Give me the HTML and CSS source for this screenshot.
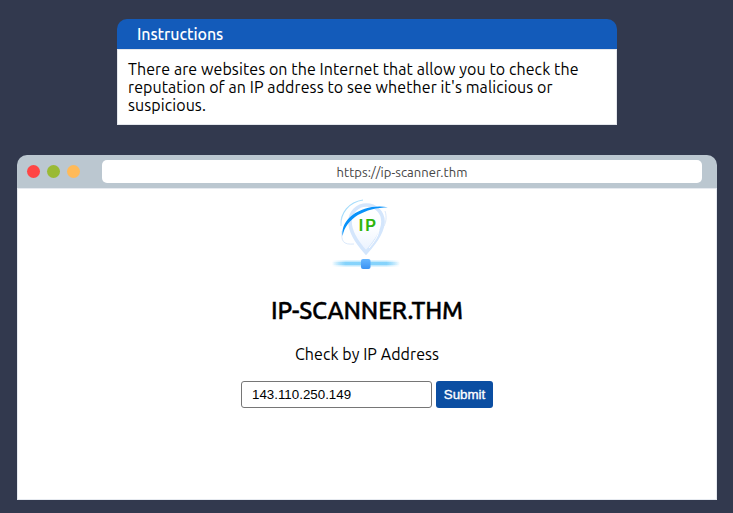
FILE: index.html
```html
<!DOCTYPE html>
<html lang="en">
<head>
<meta charset="utf-8">
<title>IP-SCANNER.THM</title>
<link rel="stylesheet" href="styles.css">
</head>
<body>
<section class="instructions">
  <h2 class="instructions-title">Instructions</h2>
  <p class="instructions-text">There are websites on the Internet that allow you to check the<br>reputation of an IP address to see whether it's malicious or<br>suspicious.</p>
</section>
<main class="browser">
  <header class="toolbar">
    <i class="dot red"></i><i class="dot green"></i><i class="dot amber"></i>
    <div class="address">https://ip-scanner.thm</div>
  </header>
  <div class="page">
    <svg class="logo" width="85" height="85" viewBox="0 0 85 85">
      <defs>
        <linearGradient id="bar" x1="0" x2="1"><stop offset="0" stop-color="#72ccfb" stop-opacity="0"/><stop offset=".2" stop-color="#72ccfb"/><stop offset=".8" stop-color="#72ccfb"/><stop offset="1" stop-color="#72ccfb" stop-opacity="0"/></linearGradient>
        <linearGradient id="pin" x1="0" y1="0" x2="0" y2="1"><stop offset="0" stop-color="#fff"/><stop offset=".5" stop-color="#fcfdff"/><stop offset="1" stop-color="#e9f2fe"/></linearGradient>
        <linearGradient id="node" x1="0" y1="0" x2="0" y2="1"><stop offset="0" stop-color="#66b6ff"/><stop offset="1" stop-color="#3b93f3"/></linearGradient>
        <linearGradient id="fade" x1="0" y1="0" x2="0" y2="1"><stop offset="0" stop-color="#a4dcfb"/><stop offset=".6" stop-color="#a4dcfb"/><stop offset="1" stop-color="#d5e6fb"/></linearGradient>
      </defs>
      <path d="M41 62.500C36 57 25 44 25 31.500a16.500 16.500 0 0 1 33 0C58 44 46 57 41 62.500Z" fill="url(#pin)" stroke="#d4e6fc" stroke-width="3.600"/>
      <path d="M44 58C49 52 53 47 54 40" fill="none" stroke="#fff" stroke-width="1"/>
      <path d="M38 10C24 12 15 23 16 36" fill="none" stroke="url(#fade)" stroke-width="1.200"/>
      <path d="M17 41C16 51 18 55 29 54" fill="none" stroke="#dbe9fb" stroke-width="1"/>
      <path d="M60 21C62 27 61 32 59 36" fill="none" stroke="#dbe9fb" stroke-width="1"/>
      <path d="M17.600 46C15 27 40 13 63 17.300C40 18 21 28 17.600 46Z" fill="#0892fa"/>
      <rect x="7" y="70.500" width="68" height="6" fill="url(#bar)" opacity=".45"/>
      <rect x="7" y="72" width="68" height="3" fill="url(#bar)" opacity=".75"/>
      <rect x="36" y="69" width="9.500" height="10" rx="2" fill="url(#node)"/>
      <text class="logo-text" x="33.700" y="40.500" textLength="17.300" lengthAdjust="spacing">IP</text>
    </svg>
    <h1>IP-SCANNER.THM</h1>
    <p class="prompt">Check by IP Address</p>
    <form class="lookup"><input type="text" value="143.110.250.149" aria-label="IP address"><button type="button">Submit</button></form>
  </div>
</main>
</body>
</html>
```
FILE: styles.css
```css
* { box-sizing: border-box; }
body {
  margin: 0;
  height: 513px;
  padding: 19px 16px 0 17px;
  overflow: hidden;
  background: #32394e;
  color: #000;
  font: 16px/18px Ubuntu, "Noto Sans", sans-serif;
}
h1, h2, p { margin: 0; font-weight: 400; }
.instructions {
  width: 500px;
  height: 106px;
  margin: 0 auto 30px;
  overflow: hidden;
  border-radius: 10px 10px 0 0;
  background: linear-gradient(#135bba 30px, #fff 30px);
}
.instructions-title {
  height: 30px;
  padding-left: 20px;
  color: #fff;
  font-size: 16px;
  line-height: 30px;
  font-weight: 500;
  letter-spacing: -0.08px;
}
.instructions-text {
  height: 76px;
  padding: 10px 10px 0;
  border: 1px solid #e4e7ec;
  white-space: nowrap;
  letter-spacing: 0.085px;
}
.browser {
  width: 700px;
  height: 345px;
  overflow: hidden;
  border-radius: 10px 10px 0 0;
  background: linear-gradient(#bbc7d0 33px, #fff 33px);
}
.toolbar {
  display: flex;
  align-items: center;
  gap: 7px;
  height: 33px;
  padding-left: 10px;
}
.dot { width: 13px; height: 13px; border-radius: 50%; }
.red { background: #ff4545; }
.green { background: #9aba34; }
.amber { background: #ffba59; }
.address {
  width: 600px;
  height: 23px;
  margin-left: 15px;
  border-radius: 5px;
  background: #fff;
  color: #444;
  font-size: 13px;
  line-height: 24px;
  letter-spacing: 0.05px;
  text-align: center;
}
.page {
  display: flex;
  flex-direction: column;
  align-items: center;
  height: 312px;
  padding-top: 1px;
  border: 1px solid #e6eaf0;
}
.logo { display: block; margin-bottom: 20px; }
.logo-text { fill: #2db50c; font: 700 16px "Liberation Sans", sans-serif; }
h1 {
  height: 32px;
  font-size: 24px;
  line-height: 32px;
  font-weight: 500;
  letter-spacing: -0.15px;
  -webkit-text-stroke: 0.4px #000;
}
.prompt { height: 20px; margin-top: 17px; line-height: 20px; letter-spacing: 0.07px; }
.lookup { display: flex; gap: 4px; margin-top: 17px; }
.lookup input {
  width: 191px;
  height: 27px;
  padding: 0 10px;
  border: 1px solid #767676;
  border-radius: 3px;
  font: 13.333px "Liberation Sans", sans-serif;
}
.lookup button {
  width: 57px;
  height: 27px;
  padding: 0;
  border: 0;
  border-radius: 3px;
  background: #0b4ea2;
  color: #fff;
  font: 13.333px "Liberation Sans", sans-serif;
  -webkit-text-stroke: 0.35px #fff;
}
```
